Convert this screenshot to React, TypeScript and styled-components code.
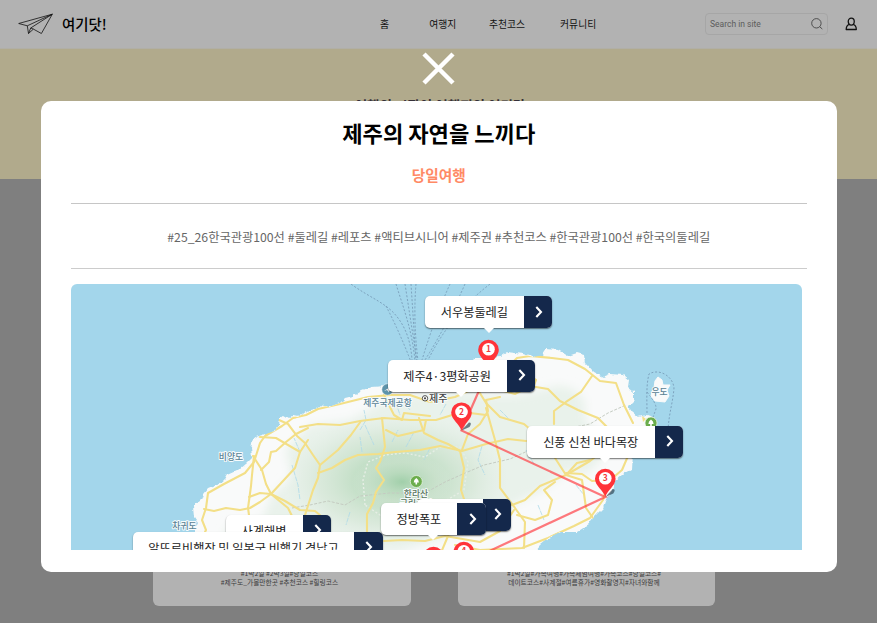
import React from "react";
import styled, { createGlobalStyle } from "styled-components";

const GlobalStyle = createGlobalStyle`
  * { box-sizing: border-box; }
  html, body { margin: 0; height: 100%; overflow: hidden; }
  body {
    background: #7f7f7f;
    font-family: "Noto Sans CJK KR", "Noto Sans", sans-serif;
    color: #000;
  }
`;

const Page = styled.div`
  height: 623px;
  overflow: hidden;
  display: flex;
  flex-direction: column;
`;

const Header = styled.header`
  flex: none;
  height: 49px;
  padding: 0 19px 0 18px;
  background: #b2b2b2;
  border-bottom: 1px solid #b1afa6;
  display: grid;
  grid-template-columns: 362px 1fr auto;
  align-items: center;
`;

const Brand = styled.a`
  display: flex;
  align-items: center;
  gap: 9px;
  font-size: 14.4px;
  font-weight: 500;
  line-height: 20px;
`;

const Nav = styled.nav`
  display: flex;
  font-size: 9.8px;
  line-height: 14px;
  color: #111;
`;

const NavItem = styled.a<{ $gap: number }>`
  margin-right: ${(p) => p.$gap}px;
  white-space: nowrap;
`;

const Tools = styled.div`
  display: flex;
  align-items: center;
  gap: 17.5px;
`;

const Search = styled.label`
  width: 123px;
  height: 22px;
  padding: 0 4px 0 4.5px;
  border: 1px solid #a6a6a6;
  border-radius: 4px;
  display: flex;
  align-items: center;
  justify-content: space-between;
  font: 8.5px Roboto, sans-serif;
  color: #5c5c5c;
`;

const Banner = styled.section`
  flex: none;
  height: 130px;
  padding-top: 43.5px;
  padding-left: 3px;
  background: #b1aa8c;
  text-align: center;
  font-size: 13.5px;
  line-height: 24px;
  font-weight: 700;
  color: #353039;
`;

const CardRow = styled.section`
  flex: none;
  margin-top: 221.5px;
  display: flex;
  justify-content: center;
  gap: 47px;
  padding-right: 9px;
`;

const Card = styled.article`
  width: 257.5px;
  height: 205px;
  padding: 0 4.5px 18.5px 0;
  border-radius: 6px;
  background: #b2b2b2;
  display: flex;
  flex-direction: column;
  justify-content: flex-end;
  text-align: center;
  font-size: 6.75px;
  line-height: 9px;
  color: #3c3c3c;
`;

const CloseButton = styled.button`
  position: fixed;
  left: 422px;
  top: 52px;
  width: 33px;
  height: 33px;
  padding: 0;
  border: 0;
  background: none;
  svg { display: block; }
`;

const Dialog = styled.section`
  position: fixed;
  left: 40.5px;
  top: 100.6px;
  width: 796.5px;
  height: 471.7px;
  padding: 0 30.5px;
  border-radius: 10px;
  background: #fff;
  display: flex;
  flex-direction: column;
`;

const Title = styled.h1`
  margin: 14px 0 0;
  font-size: 22.1px;
  line-height: 34px;
  font-weight: 700;
  text-align: center;
`;

const Duration = styled.p`
  margin: 15.5px 0 0;
  height: 39.5px;
  border-bottom: 1px solid #c6c6c6;
  font-size: 14.7px;
  line-height: 22px;
  font-weight: 700;
  color: #ff8a65;
  text-align: center;
`;

const Tags = styled.p`
  margin: 0;
  height: 65.9px;
  border-bottom: 1px solid #ccc;
  font-size: 12.25px;
  line-height: 67.5px;
  color: #666;
  text-align: center;
  white-space: nowrap;
`;

const MapBox = styled.div`
  position: relative;
  margin-top: 14.4px;
  width: 731px;
  height: 266.4px;
  border-radius: 6px 6px 0 0;
  overflow: hidden;
  background: #a3d6eb;
  > svg { display: block; }
`;

const Callout = styled.div<{ $x: number; $y: number; $w: number; $tail: number }>`
  position: absolute;
  left: ${(p) => p.$x - 71}px;
  top: ${(p) => p.$y - 284}px;
  width: ${(p) => p.$w}px;
  height: 32px;
  border-radius: 5px;
  display: flex;
  background: #fff;
  box-shadow: 0 1px 1.5px rgba(0, 0, 0, 0.55);
  &::after {
    content: "";
    position: absolute;
    left: ${(p) => p.$tail - 6}px;
    top: 31px;
    border: 6px solid transparent;
    border-top: 6px solid #fff;
    border-bottom: 0;
  }
`;

const CalloutText = styled.span`
  flex: 1;
  text-align: center;
  font-size: 12.2px;
  line-height: 32px;
  color: #222;
  white-space: nowrap;
`;

const CalloutArrow = styled.span`
  flex: none;
  width: 28.5px;
  padding: 0 0 1px 2px;
  border-radius: 0 5px 5px 0;
  background: #14284b;
  display: flex;
  align-items: center;
  justify-content: center;
`;

const places = [
  { name: "알뜨르비행장 및 일본군 비행기 격납고", x: 133, y: 532, w: 249.5, tail: 125, z: 2 },
  { name: "사계해변", x: 225.5, y: 514.7, w: 105.5, tail: 52, z: 1 },
  { name: "", x: 417, y: 498.7, w: 94, tail: 47, z: 1 },
  { name: "정방폭포", x: 380.5, y: 503.5, w: 105.3, tail: 52.5, z: 2 },
  { name: "신풍 신천 바다목장", x: 527, y: 426, w: 156, tail: 78, z: 2 },
  { name: "서우봉둘레길", x: 425, y: 296.5, w: 127.3, tail: 63.5, z: 1 },
  { name: "제주4·3평화공원", x: 387.7, y: 360, w: 147.5, tail: 73.5, z: 2 },
].sort((a, b) => a.z - b.z);

const island =
  "M195 556L195 530L198 523L194 517L193 507L201 500L203 494L208 488L223 482L227 475L238 470L246 463L252 457L251 449L253 438L262 435L275 431L278 426L279 419L284 415L289 418L293 416L298 417L306 411L314 409L320 405L329 407L340 403L345 398L353 396L362 391L372 387L385 386L400 388L430 388L455 386L470 372L475 358L487 358L500 357L507 352L523 354L533 357L543 355L547 349L558 350L568 356L577 353L584 355L585 363L593 372L603 377L610 374L623 375L629 380L628 387L634 392L634 400L628 406L632 412L638 417L647 415L655 418L654 431L642 441L632 452L631 470L622 475L615 481L613 490L607 497L603 508L594 517L588 525L577 532L560 532L550 537L540 545L531 556Z";

const greens = [
  "M215 552L230 525L262 520L272 495L292 477L285 450L310 425L350 420L386 400L450 390L490 395L520 395L560 385L585 400L585 420L610 450L586 475L570 470L540 492L512 505L500 525L460 532L400 552Z",
  "M548 402Q560 380 574 390Q590 400 578 415L550 424Z",
];

const roads = [
  "M201 540L206 530L202 520L206 508L208 493L224 484L245 473L254 462L260 443L265 436L282 426L293 418L306 415L318 409L340 404L368 397L390 395L410 395L430 402L455 397L475 388",
  "M279 420L288 424L297 436L305 443L313 455L320 465L318 478L313 490L306 512L300 530",
  "M300 427L318 424L340 425L360 421L384 418L410 420L436 420L462 412L486 415",
  "M361 421L351 435L338 450L320 465M318 473L332 468L345 460L358 455L378 454L395 452L420 450L440 446L462 451L486 444L508 439L526 441",
  "M261 470L269 462L271 452L276 451L286 442L296 434L308 428",
  "M253 456L262 470L266 484L271 494L288 508L294 520",
  "M254 456L252 475L251 486L248 508L250 522L246 535",
  "M204 509L214 511L226 508L240 510L250 508L260 502L271 494L283 481L295 468L300 452L308 440",
  "M249 497L260 493L271 494L285 501L300 510L315 511L326 520",
  "M384 395L394 415L402 420L404 413L430 416M382 418L385 447L380 462L376 468L384 480L376 492L373 503L367 514L367 532",
  "M419 418L424 433L438 440L448 444L460 451L464 468L461 490L466 505L454 520L448 536L440 555",
  "M462 450L468 434L480 424L488 411L486 400L500 397",
  "M486 408L495 440L500 460L500 488L515 508L525 522L524 548",
  "M478 390L486 403L500 417L524 424L544 441L555 458L566 475L582 480L586 508L593 518",
  "M500 390L515 394L530 386L548 389L560 401L578 410L598 418L610 430",
  "M505 370L517 358L530 356L552 358L568 360L585 369L600 381L616 383L624 405L633 423",
  "M592 376L581 392L566 402L554 411L554 424M532 390L536 380L525 373L510 370",
  "M512 505L525 500L540 486L566 475L590 461L612 444M517 515L535 520L548 515L552 500L544 490L555 482",
  "M384 541L402 540L425 541L445 536L480 542L500 531L514 510M455 545L480 550L522 548L548 538L574 526L590 518L603 500L608 482L622 470L628 456",
  "M386 430L398 436L424 430L426 420M260 437L276 438L300 452",
  "M566 475L577 463L590 460M566 473L582 474L592 481L605 480",
];

const streams = [
  "M360 430L366 420L364 410M362 452L360 437M300 452L294 438M292 465L298 485L300 500M392 442L398 430M414 432L406 447M430 448L424 460M410 410L402 400M446 404L440 415M482 446L478 460L485 475M500 410L510 420M350 512L346 525M470 505L482 512M526 450L534 464M538 505L544 520M392 512L396 526M424 510L430 522M576 485L584 495M365 425L374 445M396 403L400 415",
];

const ferries = [
  "M351 284C370 298 387 303 398 318C407 330 411 344 412 360",
  "M386 306Q400 333 411 362",
  "M396 284C403 307 412 329 415 361",
  "M405 284L417 361",
  "M411 284L416 361",
  "M416 284Q413 319 418 361",
  "M450 284Q435 317 422 360",
  "M465 284Q447 325 425 360",
  "M490 284Q451 314 428 360",
  "M647 413C647 399 646 386 649 374C659 368 673 376 674 388C673 402 669 413 668 430",
  "M647 392Q657 404 656 409L652 420",
];

const pins = [
  { n: "1", x: 488.5, y: 368 },
  { n: "2", x: 461.5, y: 430.6 },
  { n: "3", x: 605.3, y: 497 },
  { n: "5", x: 433.5, y: 575 },
  { n: "4", x: 463.8, y: 570 },
];

const Plane = () => (
  <svg width="35" height="23" viewBox="0 0 35 23" fill="none" stroke="#111" strokeWidth=".8" strokeLinejoin="round">
    <path d="M.7 10.5L34.3 1.2L23.4 20.5L15.4 16.1M.7 10.5L9.3 12.8L34.3 1.2M9.3 12.8L10.5 20.5L12.7 15L34.3 1.2M10.5 20.5L15.4 16.1L12.7 15" />
  </svg>
);

const JejuMap = () => (
  <svg width="731" height="266.4" viewBox="71 284 731 266.4">
    <defs>
      <radialGradient id="forest">
        <stop offset="0" stopColor="#a1cfaa" />
        <stop offset=".35" stopColor="#bbdbbf" stopOpacity=".85" />
        <stop offset=".7" stopColor="#cfe3d0" stopOpacity=".55" />
        <stop offset="1" stopColor="#dce9df" stopOpacity="0" />
      </radialGradient>
      <filter id="coast" x="-5%" y="-5%" width="110%" height="110%">
        <feTurbulence type="fractalNoise" baseFrequency=".17" numOctaves="2" seed="4" />
        <feDisplacementMap in="SourceGraphic" scale="5" xChannelSelector="R" yChannelSelector="G" />
      </filter>
      <filter id="soft"><feGaussianBlur stdDeviation="5" /></filter>
      <clipPath id="land"><path d={island} /></clipPath>
    </defs>
    <g fill="none" stroke="#789db9" strokeWidth=".9" strokeDasharray="2 1.8">
      {ferries.map((d) => <path key={d} d={d} />)}
    </g>
    <path d={island} fill="#f9fafa" filter="url(#coast)" />
    <path d="M652 392L654 388L655 381L658 377L662 380L663 385L670 385L667 390L669 396L665 402L655 401L651 396Z" fill="#f9fafa" stroke="#f9fafa" strokeWidth="1" />
    <g clipPath="url(#land)">
      <g fill="#e9f2eb" filter="url(#soft)">{greens.map((d) => <path key={d} d={d} />)}</g>
      <ellipse cx="396" cy="480" rx="112" ry="66" fill="url(#forest)" />
      <ellipse cx="402" cy="482" rx="50" ry="28" fill="url(#forest)" />
      <g fill="none" stroke="#add9e9" strokeWidth=".8" strokeDasharray="5 1">
        {streams.map((d) => <path key={d} d={d} />)}
      </g>
      <path d="M292 508L310 505L328 501L345 505L360 496L390 493L425 493L445 482L463 474L484 465L510 459L532 449L550 432L590 424L608 413L626 405" fill="none" stroke="#c4cbc1" strokeWidth="1" strokeDasharray="3 1.5" />
      <path d="M365 505L363 480L368 462L385 455L405 453L425 457L440 447L460 447L468 462L464 490L452 497L430 510L395 509L380 515Z" fill="none" stroke="#e6eee5" strokeWidth="1.4" strokeDasharray="2 2" />
      <g fill="none" stroke="#f3df87" strokeWidth="2.1" strokeLinejoin="round" strokeLinecap="round">
        {roads.map((d) => <path key={d} d={d} />)}
      </g>
    </g>
    <g fontSize="8.8" fontWeight="500" fill="#5a8294" stroke="#f8fcfd" strokeWidth="1.8" paintOrder="stroke" strokeLinejoin="round" textAnchor="middle">
      <text x="387.5" y="406">제주국제공항</text>
      <text x="231" y="460.5">비양도</text>
      <text x="184.5" y="529.5">차귀도</text>
      <text x="659.5" y="395.5">우도</text>
      <text x="416" y="497.5" fill="#58745c">한라산</text>
      <text x="416" y="507.5" fill="#58745c">국립공원</text>
      <text x="438.3" y="402.3" fontSize="10" fill="#444">제주</text>
    </g>
    <circle cx="425" cy="398.3" r="2.7" fill="#fff" stroke="#444" strokeWidth=".9" />
    <circle cx="425" cy="398.3" r="1.1" fill="#444" />
    <circle cx="387.5" cy="389.5" r="5.7" fill="#5d93aa" stroke="#fff" strokeWidth=".5" />
    <path d="M384 391L391 386.5L389 392.5L387 390Z" fill="#fff" />
    <path d="M643 422L642 416L646 419Z" fill="#f3df87" />
    {[[416.3, 481.5], [651, 423]].map(([x, y]) => (
      <g key={x}>
        <circle cx={x} cy={y} r="6" fill="#6bad4c" stroke="#edf5e8" strokeWidth=".7" />
        <path d={`M${x} ${y - 3.6}q2.6 1.6 2.6 4.6h-1.8v2h-1.6v-2h-1.8q0-3 2.6-4.6z`} fill="#fff" />
      </g>
    ))}
    <path d="M488.5 369L461.5 430.5L605.3 497L463.8 563" fill="none" stroke="#ff3a40" strokeOpacity=".68" strokeWidth="2.2" />
    {pins.map((p) => (
      <g key={p.n} transform={`translate(${p.x} ${p.y})`}>
        <path d="M0 0L7.5-8Q11-8 8-3.5Z" fill="#263b48" opacity=".65" />
        <path d="M0 0C-2-7-10.3-11-10.3-18.2A10.3 10 0 0 1 10.3-18.2C10.3-11 2-7 0 0Z" fill="#ff3339" />
        <circle cy="-18.7" r="6.3" fill="#fff" />
        <text y="-15.7" textAnchor="middle" fontSize="8.5" fontWeight="700" fill="#f2393d">{p.n}</text>
      </g>
    ))}
  </svg>
);

export default function App() {
  return (
    <>
      <GlobalStyle />
      <Page>
        <Header>
          <Brand><Plane />여기닷!</Brand>
          <Nav>
            <NavItem $gap={40.3}>홈</NavItem>
            <NavItem $gap={32.7}>여행지</NavItem>
            <NavItem $gap={35}>추천코스</NavItem>
            <NavItem $gap={0}>커뮤니티</NavItem>
          </Nav>
          <Tools>
            <Search>
              Search in site
              <svg width="12" height="12" viewBox="0 0 12 12" fill="none" stroke="#444" strokeWidth=".9">
                <circle cx="5.4" cy="5.3" r="4.7" /><path d="M8.8 8.8L11.3 11" />
              </svg>
            </Search>
            <svg width="13" height="14" viewBox="0 0 13 14" fill="none" stroke="#111" strokeWidth="1.3" strokeLinejoin="round">
              <path d="M4.4 7.3C1.8 8 1.2 9.8 1.2 12.5H11.3C11.3 9.8 10.7 8 8.1 7.3" />
              <ellipse cx="6.25" cy="4.6" rx="3" ry="3.5" />
            </svg>
          </Tools>
        </Header>
        <Banner>여행의 시작이 여행지의 여기닷</Banner>
        <CardRow>
          <Card><span>#1박2일 #2박3일#당일코스</span><span>#제주도_가볼만한곳 #추천코스 #힐링코스</span></Card>
          <Card><span>#1박2일#가족여행#가족체험여행#가족코스#당일코스#</span><span>데이트코스#사계절#여름휴가#영화촬영지#자녀와함께</span></Card>
        </CardRow>
      </Page>
      <CloseButton aria-label="닫기">
        <svg width="33" height="33" viewBox="0 0 33 33" stroke="#fff" strokeWidth="4.5">
          <path d="M2 2L31 31M31 2L2 31" />
        </svg>
      </CloseButton>
      <Dialog role="dialog">
        <Title>제주의 자연을 느끼다</Title>
        <Duration>당일여행</Duration>
        <Tags>#25_26한국관광100선 #둘레길 #레포츠 #액티브시니어 #제주권 #추천코스 #한국관광100선 #한국의둘레길</Tags>
        <MapBox>
          <JejuMap />
          {places.map((p) => (
            <Callout key={p.x} $x={p.x} $y={p.y} $w={p.w} $tail={p.tail}>
              <CalloutText>{p.name}</CalloutText>
              <CalloutArrow>
                <svg width="8" height="12" viewBox="0 0 8 12" fill="none" stroke="#fff" strokeWidth="2.1">
                  <path d="M1.3 1L6 6L1.3 11" />
                </svg>
              </CalloutArrow>
            </Callout>
          ))}
        </MapBox>
      </Dialog>
    </>
  );
}
